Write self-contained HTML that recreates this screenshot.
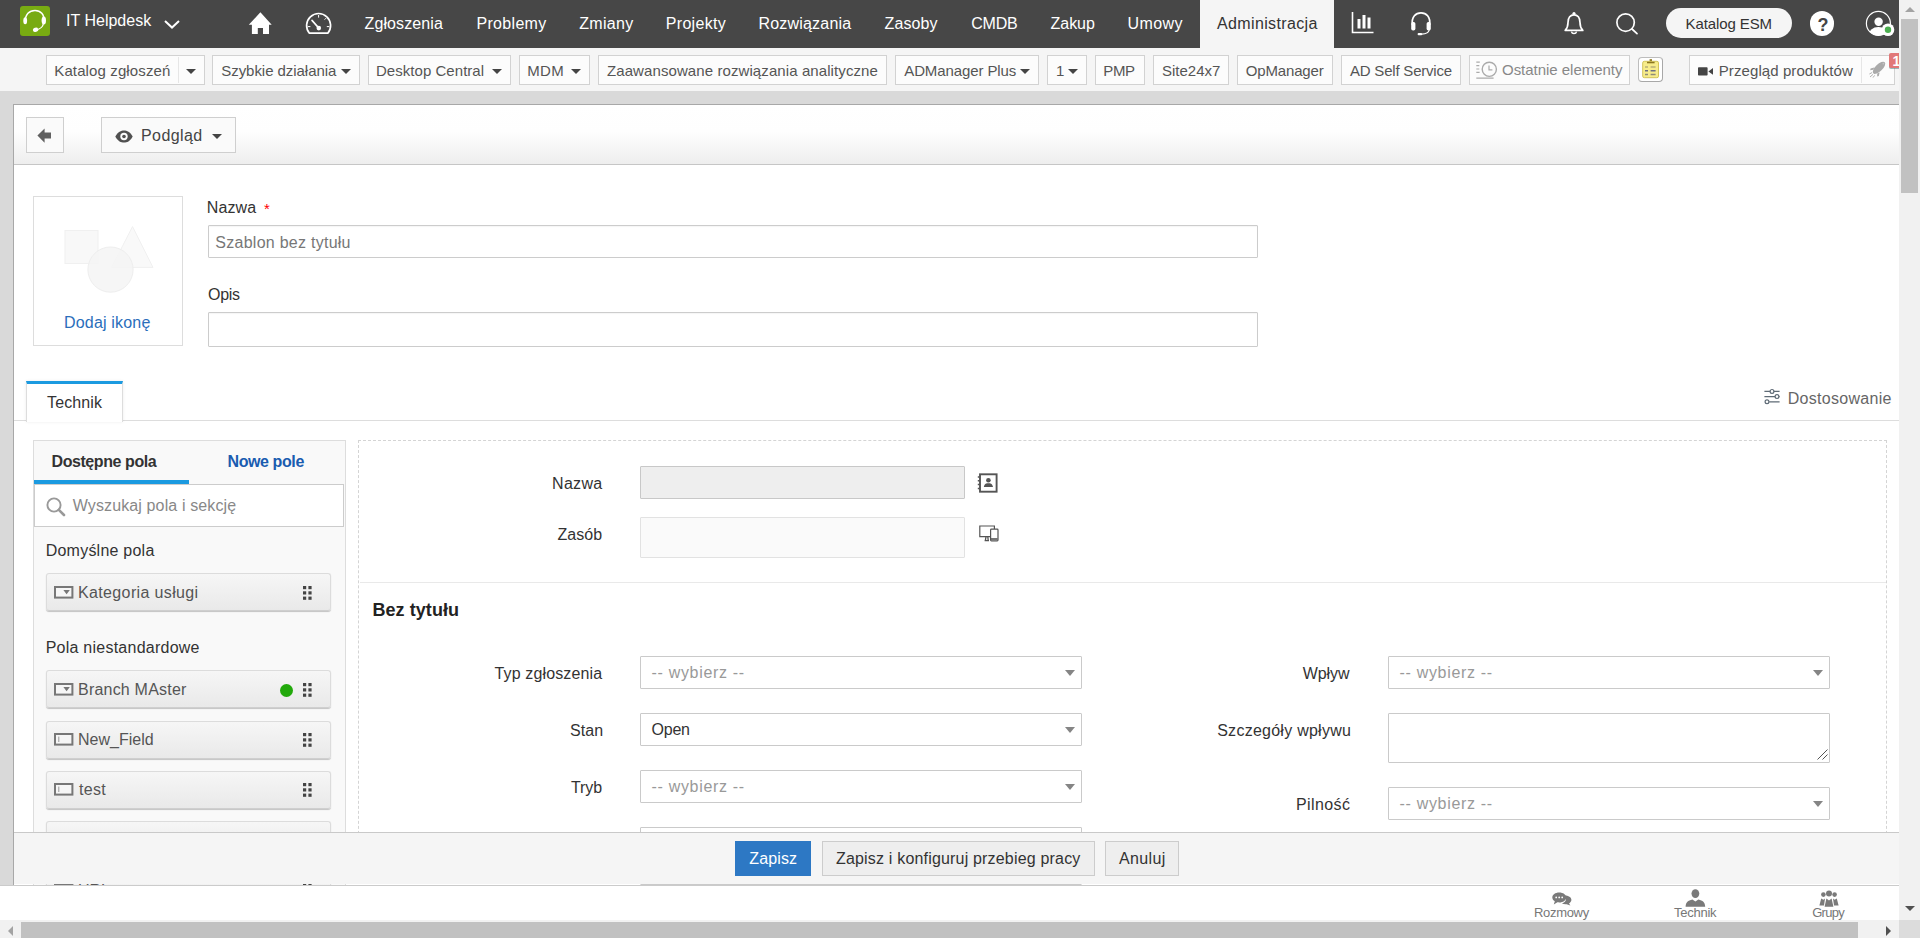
<!DOCTYPE html>
<html lang="pl"><head><meta charset="utf-8"><title>ServiceDesk Plus - Szablon</title>
<style>
html,body{margin:0;padding:0}
body{width:1920px;height:938px;overflow:hidden;position:relative;background:#fff;font-family:"Liberation Sans",sans-serif;}
body *{position:absolute;box-sizing:content-box}
header.top{background:#474747;z-index:2}
.sub{background:#f5f5f5}
.t{white-space:pre;line-height:1;display:block}
svg{display:block;overflow:visible}
i{display:block;font-style:normal}
.car{width:0;height:0}
.sb{background:#fcfcfc;border:1px solid #d2d2d2;box-sizing:border-box}
.vd{top:1px;width:1px;height:26px;background:#e6e6e6}
.tb{background:#fafafa;border:1px solid #cfcfcf;box-sizing:border-box}
.inp{background:#fff;border:1px solid #ccc;border-radius:1px;box-sizing:border-box;box-shadow:inset 0 1px 1px rgba(0,0,0,.04)}
.fi{background:linear-gradient(#f6f6f6,#e9e9e9);border:1px solid #dcdcdc;border-bottom-color:#cfcfcf;border-radius:3px;box-sizing:border-box;box-shadow:0 1px 1px rgba(0,0,0,.22)}
.sel{background:#fff;border:1px solid #cacaca;border-radius:1px;box-sizing:border-box}
.vs,.hs{background:#f1f1f1}
.th{background:#c1c1c1}
</style></head>
<body>
<header class="top" style="left:0;top:0;width:1899px;height:47.5px">
<div class="logo" style="left:20px;top:6px;width:30px;height:30px;background:#78ab12;border-radius:3px"><svg style="left:0px;top:0px" width="30" height="30" viewBox="0 0 30 30"><path d="M5.4 16.2 C4.8 8.2 9.6 4.4 15 4.4 C20.4 4.4 24.8 8.2 23.8 16" fill="none" stroke="#fff" stroke-width="1.5" stroke-linecap="round"/><ellipse cx="5.2" cy="14.8" rx="1.9" ry="3.5" fill="#fff"/><ellipse cx="23.8" cy="14.4" rx="2.2" ry="4" fill="#fff"/><path d="M23.4 17.5 C22.8 21.5 20 23 16.5 23.8" fill="none" stroke="#fff" stroke-width="1.3" stroke-linecap="round"/><ellipse cx="15.6" cy="23.8" rx="2.7" ry="2.1" fill="#fff" transform="rotate(-20 15.6 23.8)"/></svg></div>
<span class="t" style="left:66.00px;top:13px;font-size:16px;color:#fff;letter-spacing:0.013px;">IT Helpdesk</span>
<svg style="left:163px;top:19px" width="18" height="11" viewBox="0 0 18 11"><path d="M2 2 L9 8.6 L16 2" fill="none" stroke="#fff" stroke-width="2"/></svg>
<svg style="left:248px;top:12px" width="25" height="23" viewBox="0 0 25 23"><path d="M12.4 0.3 L23.7 12.8 L21 12.8 L21 21.9 L15 21.9 L15 16 L9.8 16 L9.8 21.9 L3.9 21.9 L3.9 12.8 L0.8 12.8 Z" fill="#fff"/></svg>
<svg style="left:305px;top:12px" width="28" height="23" viewBox="0 0 28 23"><path d="M4.4 21.2 A12 12 0 1 1 22.8 21.2 Z" fill="none" stroke="#fff" stroke-width="1.7" stroke-linejoin="round"/><circle cx="13.8" cy="16.1" r="2.3" fill="#fff"/><path d="M13.4 15.6 L7 8.4" stroke="#fff" stroke-width="1.6" stroke-linecap="round"/><path d="M13.6 3 V5.6 M3 14.6 H5.4 M24.2 14.6 H21.8 M19.6 7.6 L21 6.2" stroke="#fff" stroke-width="1"/></svg>
<nav style="left:0;top:0;width:1200px;height:47px">
<span class="t" style="left:364.50px;top:16px;font-size:16px;color:#fff;letter-spacing:0.114px;">Zgłoszenia</span>
<span class="t" style="left:476.50px;top:16px;font-size:16px;color:#fff;letter-spacing:0.310px;">Problemy</span>
<span class="t" style="left:579.25px;top:16px;font-size:16px;color:#fff;letter-spacing:0.309px;">Zmiany</span>
<span class="t" style="left:665.75px;top:16px;font-size:16px;color:#fff;letter-spacing:0.315px;">Projekty</span>
<span class="t" style="left:758.50px;top:16px;font-size:16px;color:#fff;letter-spacing:0.194px;">Rozwiązania</span>
<span class="t" style="left:884.50px;top:16px;font-size:16px;color:#fff;letter-spacing:0.106px;">Zasoby</span>
<span class="t" style="left:971.25px;top:16px;font-size:16px;color:#fff;letter-spacing:-0.229px;">CMDB</span>
<span class="t" style="left:1050.50px;top:16px;font-size:16px;color:#fff;letter-spacing:-0.018px;">Zakup</span>
<span class="t" style="left:1127.50px;top:16px;font-size:16px;color:#fff;letter-spacing:0.416px;">Umowy</span>
</nav>
<div style="left:1200px;top:0px;width:134px;height:47.5px;background:#f5f5f5"><span class="t" style="left:17.00px;top:16px;font-size:16px;color:#333;letter-spacing:0.364px;">Administracja</span></div>
<svg style="left:1351px;top:11px" width="24" height="24" viewBox="0 0 24 24"><path d="M1.5 1 V21.5 H22.5" fill="none" stroke="#fff" stroke-width="1.6"/><rect x="6.5" y="8" width="3" height="9.5" fill="#fff"/><rect x="11.5" y="4" width="3" height="13.5" fill="#fff"/><rect x="16.5" y="6.5" width="3" height="11" fill="#fff"/></svg>
<svg style="left:1409px;top:11px" width="24" height="25" viewBox="0 0 24 25"><path d="M3.4 14 C2.2 5.5 7 1.8 12 1.8 C17 1.8 21.8 5.5 20.6 14" fill="none" stroke="#fff" stroke-width="1.7"/><rect x="2.2" y="11" width="4.2" height="8.6" rx="1.8" fill="#fff"/><rect x="17.6" y="11" width="4.2" height="8.6" rx="1.8" fill="#fff"/><path d="M20.4 18.5 C19.8 21.6 16.5 23 12.6 23.2" fill="none" stroke="#fff" stroke-width="1.2"/><rect x="8.6" y="22" width="4.6" height="2.2" rx="1" fill="#fff"/></svg>
<svg style="left:1563px;top:11px" width="22" height="25" viewBox="0 0 22 25"><path d="M2.2 19.4 H19.8 C17.6 17 17 15 17 11.4 C17 6.6 14.6 3.8 11 3.8 C7.4 3.8 5 6.6 5 11.4 C5 15 4.4 17 2.2 19.4 Z" fill="none" stroke="#fff" stroke-width="1.7" stroke-linejoin="round"/><circle cx="11" cy="2.5" r="1.6" fill="#fff"/><path d="M8.4 20.6 A2.7 2.7 0 0 0 13.6 20.6" fill="none" stroke="#fff" stroke-width="1.5"/></svg>
<svg style="left:1615px;top:12px" width="24" height="24" viewBox="0 0 24 24"><circle cx="10.6" cy="10.6" r="8.7" fill="none" stroke="#fff" stroke-width="1.7"/><path d="M17 17 L22 21.6" stroke="#fff" stroke-width="1.7" stroke-linecap="round"/></svg>
<div style="left:1666px;top:8px;width:126px;height:30px;background:#f5f5f5;border-radius:15px"><span class="t" style="left:19.50px;top:8px;font-size:15px;color:#333;letter-spacing:-0.095px;">Katalog ESM</span></div>
<div style="left:1809.5px;top:11.3px;width:24.4px;height:24.4px;background:#fff;border-radius:50%"><span class="t" style="left:8.00px;top:4.7px;font-size:18px;color:#444;font-weight:700;">?</span></div>
<svg style="left:1864px;top:9px" width="30" height="30" viewBox="0 0 30 30"><defs><clipPath id="uc"><circle cx="14.4" cy="14.4" r="12"/></clipPath></defs><circle cx="14.4" cy="14.4" r="12" fill="none" stroke="#fff" stroke-width="1.2"/><circle cx="14.6" cy="12.8" r="4.2" fill="#fff"/><ellipse cx="14.4" cy="26.5" rx="10" ry="8.4" fill="#fff" clip-path="url(#uc)"/><circle cx="24" cy="20.7" r="6.3" fill="#fff"/><circle cx="24" cy="20.7" r="3.2" fill="#4caf50"/></svg>
</header>
<section class="sub" style="left:0;top:47px;width:1899px;height:44px">
<div class="sb" style="left:46px;top:8px;width:159px;height:30px;"><span class="t" style="left:7.25px;top:7px;font-size:15px;color:#555;letter-spacing:0.123px;">Katalog zgłoszeń</span><i class="car" style="left:138.8px;top:13px;border-left:5px solid transparent;border-right:5px solid transparent;border-top:5.4px solid #444"></i><i class="vd" style="left:131px"></i></div>
<div class="sb" style="left:212px;top:8px;width:148px;height:30px;"><span class="t" style="left:8.25px;top:7px;font-size:15px;color:#555;letter-spacing:-0.050px;">Szybkie działania</span><i class="car" style="left:128px;top:13px;border-left:5px solid transparent;border-right:5px solid transparent;border-top:5.4px solid #444"></i></div>
<div class="sb" style="left:368px;top:8px;width:143px;height:30px;"><span class="t" style="left:7.00px;top:7px;font-size:15px;color:#555;letter-spacing:0.038px;">Desktop Central</span><i class="car" style="left:122.8px;top:13px;border-left:5px solid transparent;border-right:5px solid transparent;border-top:5.4px solid #444"></i></div>
<div class="sb" style="left:519px;top:8px;width:71px;height:30px;"><span class="t" style="left:7.25px;top:7px;font-size:15px;color:#555;letter-spacing:0.336px;">MDM</span><i class="car" style="left:51px;top:13px;border-left:5px solid transparent;border-right:5px solid transparent;border-top:5.4px solid #444"></i></div>
<div class="sb" style="left:598px;top:8px;width:289px;height:30px;"><span class="t" style="left:8.00px;top:7px;font-size:15px;color:#555;letter-spacing:0.091px;">Zaawansowane rozwiązania analityczne</span></div>
<div class="sb" style="left:895px;top:8px;width:144px;height:30px;"><span class="t" style="left:8.25px;top:7px;font-size:15px;color:#555;letter-spacing:-0.107px;">ADManager Plus</span><i class="car" style="left:124.3px;top:13px;border-left:5px solid transparent;border-right:5px solid transparent;border-top:5.4px solid #444"></i></div>
<div class="sb" style="left:1047px;top:8px;width:40px;height:30px;"><span class="t" style="left:8.00px;top:7px;font-size:15px;color:#555;">1</span><i class="car" style="left:20px;top:13px;border-left:5px solid transparent;border-right:5px solid transparent;border-top:5.4px solid #444"></i></div>
<div class="sb" style="left:1095px;top:8px;width:50px;height:30px;"><span class="t" style="left:7.25px;top:7px;font-size:15px;color:#555;letter-spacing:-0.375px;">PMP</span></div>
<div class="sb" style="left:1153px;top:8px;width:76px;height:30px;"><span class="t" style="left:8.00px;top:7px;font-size:15px;color:#555;letter-spacing:-0.005px;">Site24x7</span></div>
<div class="sb" style="left:1237px;top:8px;width:96px;height:30px;"><span class="t" style="left:7.75px;top:7px;font-size:15px;color:#555;letter-spacing:-0.152px;">OpManager</span></div>
<div class="sb" style="left:1341px;top:8px;width:120px;height:30px;"><span class="t" style="left:8.00px;top:7px;font-size:15px;color:#555;letter-spacing:-0.210px;">AD Self Service</span></div>
<div class="sb" style="left:1469px;top:8px;width:161px;height:30px;"><svg style="left:6px;top:5px" width="22" height="19" viewBox="0 0 22 19"><circle cx="13.3" cy="8.3" r="7.1" fill="none" stroke="#aaa" stroke-width="1.4"/><path d="M13 4.4 V8.8 H16.4" fill="none" stroke="#aaa" stroke-width="1.2"/><path d="M0.3 1.2 H3.8 M0.3 4.6 H3.3 M0.3 8 H3.3 M0.3 11.4 H3.6 M0.3 17.2 H17.6" stroke="#aaa" stroke-width="1.2"/></svg><span class="t" style="left:32.00px;top:6px;font-size:15px;color:#888;letter-spacing:-0.025px;">Ostatnie elementy</span></div>
<div style="left:1638px;top:10px;width:25px;height:25px;background:#fff;border:1px solid #bdbdbd;border-right-color:#a8a8a8;border-bottom-color:#a8a8a8;border-radius:4px;box-sizing:border-box"><svg style="left:0px;top:0px" width="23" height="23" viewBox="0 0 23 23"><rect x="10.6" y="1.2" width="2.4" height="3.2" fill="#8a7520"/><rect x="3.7" y="3.3" width="15.8" height="16.4" rx="1.6" fill="#f7ec8a" stroke="#d2c45a" stroke-width="1"/><rect x="8" y="3.8" width="7.6" height="1.5" fill="#8a7520"/><path d="M6 9 H9 M11.6 9 H16.6" stroke="#b8af78" stroke-width="1.6"/><path d="M6 12.7 H9 M11.6 12.7 H16.6" stroke="#6c6f82" stroke-width="1.4"/><path d="M6 16.4 H9 M11.6 16.4 H16.6" stroke="#8f8c78" stroke-width="1.5"/></svg></div>
<div class="sb" style="left:1689px;top:8px;width:206px;height:30px;"><svg style="left:8px;top:10.5px" width="16" height="9" viewBox="0 0 16 9"><rect x="0" y="0.3" width="9.6" height="8.2" rx="0.8" fill="#444"/><path d="M10.4 4.4 L15 1 V7.8 Z" fill="#444"/></svg><span class="t" style="left:28.75px;top:7px;font-size:15px;color:#555;letter-spacing:0.089px;">Przegląd produktów</span><i class="vd" style="left:171px"></i><svg style="left:178px;top:5px" width="18" height="18" viewBox="0 0 18 18"><g fill="#aaa"><ellipse cx="11" cy="6.8" rx="8" ry="3.5" transform="rotate(-44 11 6.8)"/><path d="M6.2 6.4 L2.6 7.6 L2.2 9.2 L5.4 8.8 Z"/><path d="M11.6 11.4 L10.8 15 L9.2 15.4 L9.2 12.4 Z"/></g><path d="M1.4 13 L4 11.6 M2 16 L5 13.4 M5 16.6 L6.6 14.4" stroke="#b0b0b0" stroke-width="1" fill="none"/><circle cx="15.4" cy="2.6" r="0.9" fill="#c4c4c4"/></svg></div>
<div style="left:1889.3px;top:6.3px;width:9.7px;height:14.8px;background:#e17878;border-radius:2px 0 0 2px;overflow:hidden;box-shadow:0 1px 0 rgba(60,120,120,.5)"><span class="t" style="left:3.10px;top:0.7px;font-size:14px;color:#fff;font-weight:700;">1</span></div>
</section>
<main style="left:0;top:91px;width:1899px;height:829px;background:#d9d9d9">
<div class="page" style="left:13px;top:13px;width:1886px;height:817px;background:#fff;border-left:1px solid #a8a8a8;border-top:1px solid #a8a8a8;box-sizing:border-box"></div>
<div style="left:14px;top:14px;width:1885px;height:59px;background:linear-gradient(#fff 0%,#fefefe 45%,#eee 100%);border-bottom:1px solid #c6c6c6"></div>
<div class="tb" style="left:26px;top:26px;width:38px;height:36px;"><svg style="left:10.2px;top:9.6px" width="15" height="15" viewBox="0 0 15 15"><path d="M0.4 7.6 L7.6 0.4 V4.6 H14 V10.6 H7.6 V14.8 Z" fill="#606060"/></svg></div>
<div class="tb" style="left:101px;top:26px;width:135px;height:36px;"><svg style="left:13px;top:11.5px" width="18" height="13" viewBox="0 0 18 13"><path d="M0.3 6.5 C3 1.6 6 0.4 9 0.4 C12 0.4 15 1.6 17.7 6.5 C15 11.4 12 12.6 9 12.6 C6 12.6 3 11.4 0.3 6.5 Z" fill="#505050"/><circle cx="9" cy="6.5" r="3.7" fill="#fafafa"/><circle cx="9" cy="6.5" r="1.8" fill="#505050"/></svg><span class="t" style="left:39.00px;top:10px;font-size:16px;color:#444;letter-spacing:0.413px;">Podgląd</span><i class="car" style="left:110px;top:16px;border-left:5px solid transparent;border-right:5px solid transparent;border-top:5px solid #444"></i></div>
<div class="ib" style="left:33px;top:105px;width:150px;height:150px;border:1px solid #ddd;box-sizing:border-box"><svg style="left:30px;top:28px" width="92" height="70" viewBox="0 0 92 70"><rect x="1" y="5.5" width="33" height="33" fill="#f8f8f8" stroke="#f0f0f0"/><path d="M68.5 1.6 L89 42.4 H47.6 Z" fill="#f9f9f9" stroke="#f0f0f0"/><circle cx="46.5" cy="44.6" r="22.6" fill="#f5f5f5" fill-opacity="0.85" stroke="#eeeeee"/></svg><span class="t" style="left:30.00px;top:118px;font-size:16px;color:#2a6ebb;letter-spacing:0.180px;">Dodaj ikonę</span></div>
<span class="t" style="left:206.80px;top:109px;font-size:16px;color:#333;letter-spacing:0.123px;">Nazwa</span>
<span class="t" style="left:264.00px;top:110px;font-size:15px;color:#f00;">*</span>
<div class="inp" style="left:208px;top:134px;width:1050px;height:33px;"><span class="t" style="left:6.30px;top:9px;font-size:16px;color:#777;letter-spacing:0.262px;">Szablon bez tytułu</span></div>
<span class="t" style="left:208.00px;top:196px;font-size:16px;color:#333;letter-spacing:-0.299px;">Opis</span>
<div class="inp" style="left:208px;top:221.3px;width:1050px;height:34.5px;"></div>
<div style="left:14px;top:329px;width:1885px;height:1px;background:#ddd"></div>
<div style="left:26px;top:290px;width:97px;height:41px;background:#fff;border:1px solid #ddd;border-top:3px solid #1b9ae0;border-bottom:0;box-sizing:border-box;box-shadow:0 0 3px rgba(0,0,0,.08)"><span class="t" style="left:20.00px;top:11px;font-size:16px;color:#333;letter-spacing:0.125px;">Technik</span></div>
<svg style="left:1764px;top:297px" width="17" height="18" viewBox="0 0 17 18"><g fill="none" stroke="#5f6b76" stroke-width="1.2"><path d="M0.4 3.4 H6.2 M9.8 3.4 H15.6 M0.4 8.6 H11 M14.8 8.6 H15.6 M5.2 13.8 H15.6"/><circle cx="8" cy="3.4" r="1.9"/><circle cx="13" cy="8.6" r="1.9"/><circle cx="3" cy="13.8" r="1.9"/></g></svg>
<span class="t" style="left:1787.70px;top:300px;font-size:16px;color:#666;letter-spacing:0.300px;">Dostosowanie</span>
<div class="lp" style="left:33px;top:349px;width:313px;height:460px;background:#f9f9f9;border:1px solid #ddd;box-sizing:border-box"></div>
<span class="t" style="left:51.50px;top:363px;font-size:16px;color:#333;font-weight:700;letter-spacing:-0.420px;">Dostępne pola</span>
<span class="t" style="left:227.50px;top:363px;font-size:16px;color:#1a5cb0;font-weight:700;letter-spacing:-0.401px;">Nowe pole</span>
<div style="left:34px;top:389px;width:155px;height:4px;background:#1b9ae0"></div>
<div style="left:34px;top:393px;width:310px;height:43px;background:#fff;border:1px solid #ccc;box-sizing:border-box"><svg style="left:11px;top:12px" width="20" height="20" viewBox="0 0 20 20"><circle cx="8" cy="8" r="6.6" fill="none" stroke="#999" stroke-width="1.9"/><path d="M12.8 12.8 L18 18" stroke="#999" stroke-width="2.6" stroke-linecap="round"/></svg><span class="t" style="left:37.70px;top:13px;font-size:16px;color:#888;letter-spacing:0.128px;">Wyszukaj pola i sekcję</span></div>
<span class="t" style="left:45.70px;top:452px;font-size:16px;color:#333;letter-spacing:0.231px;">Domyślne pola</span>
<span class="t" style="left:45.70px;top:549px;font-size:16px;color:#333;letter-spacing:0.242px;">Pola niestandardowe</span>
<div class="fi" style="left:46px;top:482px;width:285px;height:38px;"><svg style="left:7.4px;top:12.4px" width="20" height="13" viewBox="0 0 20 13"><rect x="1" y="1" width="17.4" height="10.6" fill="#f6f6f6" stroke="#777" stroke-width="2"/><path d="M9.4 4 H15.8 L12.6 8.2 Z" fill="#777"/></svg><span class="t" style="left:31.00px;top:11px;font-size:16px;color:#555;letter-spacing:0.361px;">Kategoria usługi</span><svg style="left:256px;top:12.4px" width="10" height="15" viewBox="0 0 10 15"><g fill="#444"><rect x="0" y="0" width="3.2" height="3.2"/><rect x="5.4" y="0" width="3.2" height="3.2"/><rect x="0" y="5.3" width="3.2" height="3.2"/><rect x="5.4" y="5.3" width="3.2" height="3.2"/><rect x="0" y="10.6" width="3.2" height="3.2"/><rect x="5.4" y="10.6" width="3.2" height="3.2"/></g></svg></div>
<div class="fi" style="left:46px;top:579px;width:285px;height:38px;"><svg style="left:7.4px;top:12.4px" width="20" height="13" viewBox="0 0 20 13"><rect x="1" y="1" width="17.4" height="10.6" fill="#f6f6f6" stroke="#777" stroke-width="2"/><path d="M9.4 4 H15.8 L12.6 8.2 Z" fill="#777"/></svg><span class="t" style="left:31.00px;top:11px;font-size:16px;color:#555;letter-spacing:0.210px;">Branch MAster</span><svg style="left:256px;top:12.4px" width="10" height="15" viewBox="0 0 10 15"><g fill="#444"><rect x="0" y="0" width="3.2" height="3.2"/><rect x="5.4" y="0" width="3.2" height="3.2"/><rect x="0" y="5.3" width="3.2" height="3.2"/><rect x="5.4" y="5.3" width="3.2" height="3.2"/><rect x="0" y="10.6" width="3.2" height="3.2"/><rect x="5.4" y="10.6" width="3.2" height="3.2"/></g></svg><i style="left:232.8px;top:12.6px;width:13.4px;height:13.4px;border-radius:50%;background:#22a90b"></i></div>
<div class="fi" style="left:46px;top:630px;width:285px;height:38px;"><svg style="left:7.4px;top:11.4px" width="20" height="13" viewBox="0 0 20 13"><rect x="1" y="1" width="17.4" height="10.6" fill="#f6f6f6" stroke="#777" stroke-width="2"/><path d="M4.8 3.6 V9" stroke="#999" stroke-width="1"/></svg><span class="t" style="left:31.00px;top:10px;font-size:16px;color:#555;letter-spacing:0.014px;">New_Field</span><svg style="left:256px;top:11.4px" width="10" height="15" viewBox="0 0 10 15"><g fill="#444"><rect x="0" y="0" width="3.2" height="3.2"/><rect x="5.4" y="0" width="3.2" height="3.2"/><rect x="0" y="5.3" width="3.2" height="3.2"/><rect x="5.4" y="5.3" width="3.2" height="3.2"/><rect x="0" y="10.6" width="3.2" height="3.2"/><rect x="5.4" y="10.6" width="3.2" height="3.2"/></g></svg></div>
<div class="fi" style="left:46px;top:680px;width:285px;height:38px;"><svg style="left:7.4px;top:11.4px" width="20" height="13" viewBox="0 0 20 13"><rect x="1" y="1" width="17.4" height="10.6" fill="#f6f6f6" stroke="#777" stroke-width="2"/><path d="M4.8 3.6 V9" stroke="#999" stroke-width="1"/></svg><span class="t" style="left:32.00px;top:10px;font-size:16px;color:#555;letter-spacing:0.285px;">test</span><svg style="left:256px;top:11.4px" width="10" height="15" viewBox="0 0 10 15"><g fill="#444"><rect x="0" y="0" width="3.2" height="3.2"/><rect x="5.4" y="0" width="3.2" height="3.2"/><rect x="0" y="5.3" width="3.2" height="3.2"/><rect x="5.4" y="5.3" width="3.2" height="3.2"/><rect x="0" y="10.6" width="3.2" height="3.2"/><rect x="5.4" y="10.6" width="3.2" height="3.2"/></g></svg></div>
<div class="fi" style="left:46px;top:730px;width:285px;height:38px;"><svg style="left:7.4px;top:12.4px" width="20" height="13" viewBox="0 0 20 13"><rect x="1" y="1" width="17.4" height="10.6" fill="#f6f6f6" stroke="#777" stroke-width="2"/><path d="M4.8 3.6 V9" stroke="#999" stroke-width="1"/></svg><span class="t" style="left:31.00px;top:11px;font-size:16px;color:#555;letter-spacing:0.625px;">Pole</span><svg style="left:256px;top:12.4px" width="10" height="15" viewBox="0 0 10 15"><g fill="#444"><rect x="0" y="0" width="3.2" height="3.2"/><rect x="5.4" y="0" width="3.2" height="3.2"/><rect x="0" y="5.3" width="3.2" height="3.2"/><rect x="5.4" y="5.3" width="3.2" height="3.2"/><rect x="0" y="10.6" width="3.2" height="3.2"/><rect x="5.4" y="10.6" width="3.2" height="3.2"/></g></svg></div>
<div class="fi" style="left:46px;top:780px;width:285px;height:38px;"><svg style="left:7.4px;top:12.4px" width="20" height="13" viewBox="0 0 20 13"><rect x="1" y="1" width="17.4" height="10.6" fill="#f6f6f6" stroke="#777" stroke-width="2"/><path d="M4.8 3.6 V9" stroke="#999" stroke-width="1"/></svg><span class="t" style="left:31.00px;top:11px;font-size:16px;color:#555;letter-spacing:-0.055px;">URL</span><svg style="left:256px;top:12.4px" width="10" height="15" viewBox="0 0 10 15"><g fill="#444"><rect x="0" y="0" width="3.2" height="3.2"/><rect x="5.4" y="0" width="3.2" height="3.2"/><rect x="0" y="5.3" width="3.2" height="3.2"/><rect x="5.4" y="5.3" width="3.2" height="3.2"/><rect x="0" y="10.6" width="3.2" height="3.2"/><rect x="5.4" y="10.6" width="3.2" height="3.2"/></g></svg></div>
<div class="fp" style="left:358px;top:349px;width:1529px;height:444px;border:1px dashed #d4d4d4;border-bottom:0;box-sizing:border-box"></div>
<span class="t" style="left:552.00px;top:385px;font-size:16px;color:#333;letter-spacing:0.323px;">Nazwa</span>
<div style="left:640px;top:375px;width:325px;height:33px;background:#eee;border:1px solid #c8c8c8;border-radius:1px;box-sizing:border-box"></div>
<svg style="left:977px;top:381.5px" width="21" height="20" viewBox="0 0 21 20"><rect x="3" y="1.3" width="16.6" height="17.4" fill="#fff" stroke="#555" stroke-width="1.9"/><path d="M0.8 4 H3 M0.8 7.8 H3 M0.8 11.6 H3 M0.8 15.4 H3" stroke="#555" stroke-width="1.5"/><circle cx="11.4" cy="7.2" r="2.3" fill="#555"/><path d="M6.8 14 C7.4 10.6 9.6 10.2 11.4 10.2 C13.2 10.2 15.4 10.6 16 14 Z" fill="#555"/></svg>
<span class="t" style="left:557.40px;top:436px;font-size:16px;color:#333;letter-spacing:0.082px;">Zasób</span>
<div style="left:640px;top:426px;width:325px;height:41px;background:#fafafa;border:1px solid #e2e2e2;border-radius:1px;box-sizing:border-box"></div>
<svg style="left:979px;top:434px" width="20" height="17" viewBox="0 0 20 17"><path d="M15.4 4 V1 H0.8 V11.6 H11" fill="none" stroke="#555" stroke-width="1.2"/><path d="M5.6 15.6 H10 M7 11.6 L6.4 15.4 M8.8 11.6 L9.2 15.4" stroke="#555" stroke-width="1.3"/><rect x="11.6" y="4.2" width="7.4" height="11.6" rx="0.8" fill="#fff" stroke="#555" stroke-width="1.2"/><path d="M12 14 H18.6" stroke="#555" stroke-width="1.6"/></svg>
<div style="left:360px;top:491px;width:1526px;height:1px;background:#e9e9e9"></div>
<span class="t" style="left:372.40px;top:510px;font-size:18px;color:#222;font-weight:700;letter-spacing:0.077px;">Bez tytułu</span>
<span class="t" style="left:494.50px;top:575px;font-size:16px;color:#333;letter-spacing:0.136px;">Typ zgłoszenia</span>
<div class="sel" style="left:640px;top:565px;width:442px;height:33px;"><span class="t" style="left:10.60px;top:8px;font-size:16px;color:#999;letter-spacing:0.670px;">-- wybierz --</span><i class="car" style="left:423.6px;top:13.2px;border-left:5.3px solid transparent;border-right:5.3px solid transparent;border-top:6px solid #858585"></i></div>
<span class="t" style="left:570.00px;top:632px;font-size:16px;color:#333;letter-spacing:0.095px;">Stan</span>
<div class="sel" style="left:640px;top:622px;width:442px;height:33px;"><span class="t" style="left:10.60px;top:8px;font-size:16px;color:#333;letter-spacing:-0.281px;">Open</span><i class="car" style="left:423.6px;top:13.2px;border-left:5.3px solid transparent;border-right:5.3px solid transparent;border-top:6px solid #858585"></i></div>
<span class="t" style="left:571.00px;top:689px;font-size:16px;color:#333;letter-spacing:-0.069px;">Tryb</span>
<div class="sel" style="left:640px;top:679px;width:442px;height:33px;"><span class="t" style="left:10.60px;top:8px;font-size:16px;color:#999;letter-spacing:0.670px;">-- wybierz --</span><i class="car" style="left:423.6px;top:13.2px;border-left:5.3px solid transparent;border-right:5.3px solid transparent;border-top:6px solid #858585"></i></div>
<div class="sel" style="left:640px;top:736px;width:442px;height:33px;"></div>
<div class="sel" style="left:640px;top:793px;width:442px;height:33px;"></div>
<span class="t" style="left:1302.70px;top:575px;font-size:16px;color:#333;letter-spacing:-0.064px;">Wpływ</span>
<div class="sel" style="left:1388px;top:565px;width:442px;height:33px;"><span class="t" style="left:10.60px;top:8px;font-size:16px;color:#999;letter-spacing:0.670px;">-- wybierz --</span><i class="car" style="left:423.6px;top:13.2px;border-left:5.3px solid transparent;border-right:5.3px solid transparent;border-top:6px solid #858585"></i></div>
<span class="t" style="left:1217.20px;top:632px;font-size:16px;color:#333;letter-spacing:0.258px;">Szczegóły wpływu</span>
<div class="sel" style="left:1388px;top:622px;width:442px;height:50px;"><svg style="left:428px;top:35px" width="11" height="11" viewBox="0 0 11 11"><path d="M0.5 10.5 L10.5 0.5 M5.5 10.5 L10.5 5.5" stroke="#555" stroke-width="1"/></svg></div>
<span class="t" style="left:1296.00px;top:706px;font-size:16px;color:#333;letter-spacing:0.404px;">Pilność</span>
<div class="sel" style="left:1388px;top:696px;width:442px;height:33px;"><span class="t" style="left:10.60px;top:8px;font-size:16px;color:#999;letter-spacing:0.670px;">-- wybierz --</span><i class="car" style="left:423.6px;top:13.2px;border-left:5.3px solid transparent;border-right:5.3px solid transparent;border-top:6px solid #858585"></i></div>
<div class="fb" style="left:14px;top:741px;width:1885px;height:52px;background:#f5f5f5;border-top:1px solid #c9c9c9;box-sizing:border-box"></div>
<div class="bt" style="left:735px;top:750px;width:76px;height:35px;background:#2d78c4"><span class="t" style="left:14.30px;top:10px;font-size:16px;color:#fff;letter-spacing:0.115px;">Zapisz</span></div>
<div class="bt" style="left:822px;top:750px;width:273px;height:35px;background:#eee;border:1px solid #ccc;box-sizing:border-box"><span class="t" style="left:13.00px;top:9px;font-size:16px;color:#333;letter-spacing:0.181px;">Zapisz i konfiguruj przebieg pracy</span></div>
<div class="bt" style="left:1105px;top:750px;width:74px;height:35px;background:#eee;border:1px solid #ccc;box-sizing:border-box"><span class="t" style="left:13.00px;top:9px;font-size:16px;color:#333;letter-spacing:0.376px;">Anuluj</span></div>
<div class="cb" style="left:0px;top:794px;width:1899px;height:35px;background:#fff;border-top:1px solid #cbcbcb;box-sizing:border-box"></div>
<svg style="left:1551.5px;top:800.5px" width="20" height="14" viewBox="0 0 20 14"><g fill="#7a7a7a"><path d="M12.2 3.4 C16 3.2 19.4 5 19.4 7.8 C19.4 9.4 18.4 10.6 17 11.4 L18.4 13.6 L14.6 12.2 C12.6 12.4 11 12 9.8 11.2 C13.6 10.6 15.6 7 12.2 3.4 Z"/><path d="M7.2 0.4 C11.2 0.4 14.2 2.6 14.2 5.4 C14.2 8.2 11.2 10.4 7.2 10.4 C6.6 10.4 6 10.36 5.4 10.26 L1.8 12.4 L2.8 9.3 C1.3 8.3 0.3 6.95 0.3 5.4 C0.3 2.6 3.2 0.4 7.2 0.4 Z"/></g><g fill="#fff"><circle cx="4.2" cy="5.4" r="0.9"/><circle cx="7.2" cy="5.4" r="0.9"/><circle cx="10.2" cy="5.4" r="0.9"/></g></svg>
<span class="t" style="left:1534.00px;top:815px;font-size:13px;color:#777;letter-spacing:-0.311px;">Rozmowy</span>
<svg style="left:1685px;top:798px" width="21" height="18" viewBox="0 0 21 18"><g fill="#7a7a7a"><ellipse cx="10.4" cy="4.6" rx="3.9" ry="4.4"/><path d="M0.6 17.8 C0.8 13.4 3 11.6 7.4 10.6 L10.4 12.6 L13.4 10.6 C17.8 11.6 20 13.4 20.2 17.8 Z"/></g></svg>
<span class="t" style="left:1674.00px;top:815px;font-size:13px;color:#777;letter-spacing:-0.263px;">Technik</span>
<svg style="left:1819px;top:798.5px" width="20" height="17" viewBox="0 0 20 17"><g fill="#7a7a7a"><circle cx="10" cy="3.6" r="3"/><circle cx="4.4" cy="4.6" r="2.3"/><circle cx="15.6" cy="4.6" r="2.3"/><path d="M5.6 16.8 L7.4 8.4 L10 10.4 L12.6 8.4 L14.4 16.8 Z"/><path d="M0.4 15.6 L2.2 8.6 L4.4 9.8 L6 8.4 L5 15.6 Z"/><path d="M19.6 15.6 L17.8 8.6 L15.6 9.8 L14 8.4 L15 15.6 Z"/></g></svg>
<span class="t" style="left:1812.20px;top:815px;font-size:13px;color:#777;letter-spacing:-0.725px;">Grupy</span>
</main>
<aside class="vs" style="left:1899px;top:0;width:21px;height:920px"><i class="th" style="left:2px;top:19px;width:17px;height:174px"></i><i class="car" style="left:5.6px;top:7px;border-left:5px solid transparent;border-right:5px solid transparent;border-bottom:5px solid #a3a3a3"></i><i class="car" style="left:5.6px;top:906px;border-left:5px solid transparent;border-right:5px solid transparent;border-top:5px solid #505050"></i></aside>
<aside class="hs" style="left:0;top:920px;width:1899px;height:18px"><i class="th" style="left:21px;top:2px;width:1837px;height:16px"></i><i class="car" style="left:8px;top:5.5px;border-top:5px solid transparent;border-bottom:5px solid transparent;border-right:5.4px solid #a3a3a3"></i><i class="car" style="left:1886px;top:5.5px;border-top:5px solid transparent;border-bottom:5px solid transparent;border-left:5.4px solid #505050"></i></aside>
<aside style="left:1899px;top:920px;width:21px;height:18px;background:#dcdcdc"></aside>
</body></html>
